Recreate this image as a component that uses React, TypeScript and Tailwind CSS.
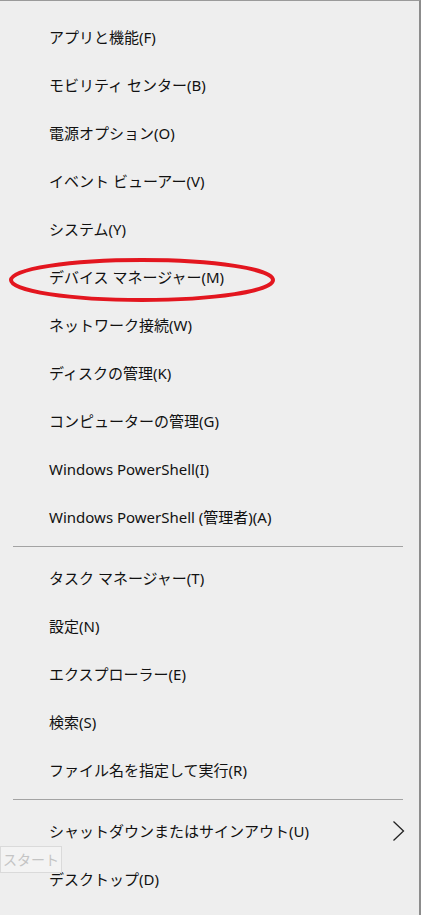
import React from "react";

const group1 = [
  "アプリと機能(F)",
  "モビリティ センター(B)",
  "電源オプション(O)",
  "イベント ビューアー(V)",
  "システム(Y)",
  "デバイス マネージャー(M)",
  "ネットワーク接続(W)",
  "ディスクの管理(K)",
  "コンピューターの管理(G)",
  "Windows PowerShell(I)",
  "Windows PowerShell (管理者)(A)",
];

const group2 = [
  "タスク マネージャー(T)",
  "設定(N)",
  "エクスプローラー(E)",
  "検索(S)",
  "ファイル名を指定して実行(R)",
];

function Item({ label, children }: { label: string; children?: React.ReactNode }) {
  return (
    <div className="relative flex h-[48px] items-center pl-[49px] pr-4 text-[15px] text-[#111]">
      <span>{label}</span>
      {children}
    </div>
  );
}

function Sep() {
  return (
    <div className="pl-[13px] pr-[16px] pt-[5px] pb-[7px]">
      <div className="h-px bg-[#a3a3a3]" />
    </div>
  );
}

export default function App() {
  return (
    <div
      className="relative h-[915px] w-[421px] overflow-hidden bg-[#eeeeee] border-t border-t-[#9a9a9a] border-r-2 border-r-[#8c8c8c]"
      style={{ fontFamily: '"Noto Sans", "Noto Sans CJK JP", sans-serif' }}
    >
      <div className="pt-[12px]">
        {group1.map((l) => (
          <Item key={l} label={l} />
        ))}
        <Sep />
        {group2.map((l) => (
          <Item key={l} label={l} />
        ))}
        <Sep />
        <Item label="シャットダウンまたはサインアウト(U)">
          <svg
            className="absolute right-[14px] top-[13px]"
            width="13"
            height="22"
            viewBox="0 0 13 22"
            fill="none"
          >
            <path d="M1.5 1.5 L11.5 11 L1.5 20.5" stroke="#222" strokeWidth="1.3" />
          </svg>
        </Item>
        <Item label="デスクトップ(D)" />
      </div>

      {/* red ellipse annotation */}
      <svg
        className="absolute left-[8px] top-[256px]"
        width="268"
        height="46"
        viewBox="0 0 268 46"
        fill="none"
      >
        <ellipse cx="134" cy="23" rx="131" ry="20" stroke="#e3161f" strokeWidth="4" />
      </svg>

      {/* start tooltip */}
      <div className="absolute left-0 top-[845px] flex h-[27px] w-[62px] items-center justify-center border border-[#dadada] bg-[#f3f3f3] text-[14px] text-[#c4c4c4]">
        スタート
      </div>
    </div>
  );
}
